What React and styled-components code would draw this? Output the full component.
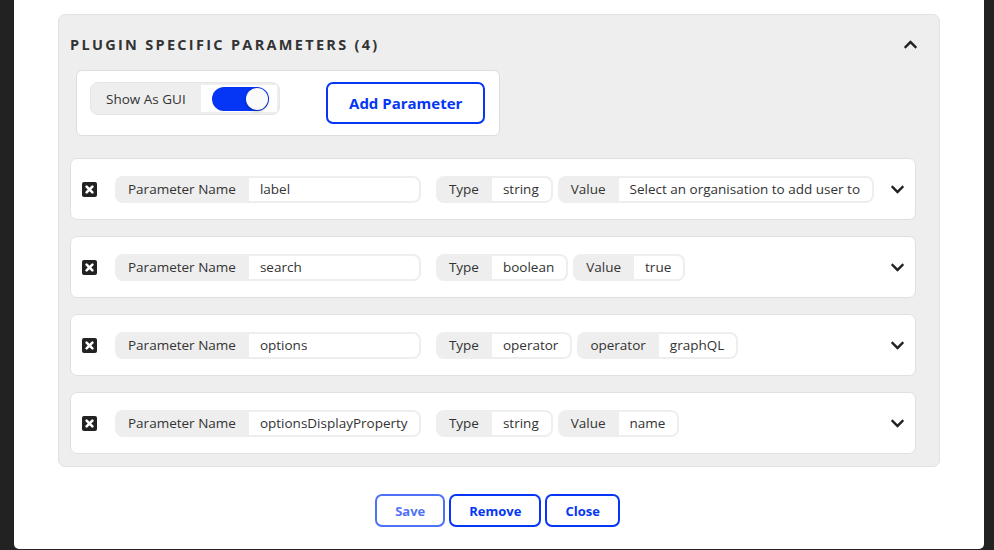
import React from 'react'
import styled, { createGlobalStyle } from 'styled-components'
import { FaChevronUp, FaChevronDown } from 'react-icons/fa'

const GlobalStyle = createGlobalStyle`
    html, body {
        margin: 0;
        padding: 0;
        background: #222222;
        font-family: "Open Sans", "Liberation Sans", sans-serif;
        color: #333;
    }
`

const BLUE = '#0536f5'

const params = [
    { name: 'label', extras: [['Type', 'string'], ['Value', 'Select an organisation to add user to']] },
    { name: 'search', extras: [['Type', 'boolean'], ['Value', 'true']] },
    { name: 'options', extras: [['Type', 'operator'], ['operator', 'graphQL']] },
    { name: 'optionsDisplayProperty', extras: [['Type', 'string'], ['Value', 'name']] },
]

const CloseBox = () => (
    <svg width="15" height="15" viewBox="0 0 15 15">
        <rect x="0" y="0" width="15" height="15" rx="2" fill="#222" />
        <path d="M4.6 4.6 L10.4 10.4 M10.4 4.6 L4.6 10.4" stroke="#fff" strokeWidth="2.6" strokeLinecap="round" />
    </svg>
)

const App = () => {
    return (
        <>
            <GlobalStyle />
            <Page>
                <Modal>
                    <Panel>
                        <PanelHeader>
                            <Title>Plugin Specific Parameters (4)</Title>
                            <Caret><FaChevronUp /></Caret>
                        </PanelHeader>
                        <Toolbar>
                            <ToggleGroup>
                                <ToggleLabel>Show As GUI</ToggleLabel>
                                <ToggleWrap>
                                    <Switch on>
                                        <Knob />
                                    </Switch>
                                </ToggleWrap>
                            </ToggleGroup>
                            <AddButton>Add Parameter</AddButton>
                        </Toolbar>
                        <Rows>
                            {params.map((p) => (
                                <Row key={p.name}>
                                    <RemoveIcon><CloseBox /></RemoveIcon>
                                    <NameGroup>
                                        <PillLabel>Parameter Name</PillLabel>
                                        <NameInput>{p.name}</NameInput>
                                    </NameGroup>
                                    <Extras>
                                        {p.extras.map(([k, v]) => (
                                            <Pill key={k}>
                                                <PillLabel>{k}</PillLabel>
                                                <PillValue>{v}</PillValue>
                                            </Pill>
                                        ))}
                                    </Extras>
                                    <RowCaret><FaChevronDown /></RowCaret>
                                </Row>
                            ))}
                        </Rows>
                    </Panel>
                    <Footer>
                        <FooterButton faded>Save</FooterButton>
                        <FooterButton>Remove</FooterButton>
                        <FooterButton>Close</FooterButton>
                    </Footer>
                </Modal>
            </Page>
        </>
    )
}

const Page = styled.div`
    width: 994px;
    height: 550px;
    overflow: hidden;
    background: #222222;
`
const Modal = styled.div`
    margin-left: 14px;
    width: 970px;
    height: 549px;
    background: #fff;
    border-radius: 0 0 5px 5px;
    padding: 14px 44px 0;
    box-sizing: border-box;
`
const Panel = styled.section`
    background: #eeeeee;
    border: 1px solid #e2e2e2;
    border-radius: 7px;
    padding: 0 23px 11px 11px;
    box-sizing: border-box;
    height: 453px;
`
const PanelHeader = styled.div`
    display: flex;
    align-items: center;
    justify-content: space-between;
    height: 55px;
    padding-top: 4px;
    box-sizing: border-box;
`
const Title = styled.h2`
    margin: 0;
    font-size: 14.5px;
    font-weight: 700;
    letter-spacing: 2.3px;
    text-transform: uppercase;
    color: #333;
`
const Caret = styled.span`
    display: flex;
    font-size: 15px;
    color: #222;
    margin-right: -2px;
`
const Toolbar = styled.div`
    display: flex;
    align-items: center;
    gap: 46px;
    width: 424px;
    height: 66px;
    margin-left: 6px;
    padding: 0 14px 0 13px;
    box-sizing: border-box;
    background: #fff;
    border: 1px solid #dddddd;
    border-radius: 6px;
`
const ToggleGroup = styled.div`
    display: flex;
    align-items: stretch;
    height: 31px;
    background: #eeeeee;
    border: 1px solid #e6e6e6;
    border-radius: 8px;
    overflow: hidden;
    margin-top: -9px;
`
const ToggleLabel = styled.span`
    display: flex;
    align-items: center;
    padding: 0 15px;
    font-size: 13.5px;
    width: 111px;
    box-sizing: border-box;
`
const ToggleWrap = styled.span`
    display: flex;
    align-items: center;
    background: #fff;
    padding: 0 8px 0 11px;
    margin: 2px 2px 2px 0;
`
const Switch = styled.span`
    display: flex;
    align-items: center;
    justify-content: ${({ on }) => (on ? 'flex-end' : 'flex-start')};
    width: 57px;
    height: 24px;
    border-radius: 12px;
    background: ${({ on }) => (on ? BLUE : '#ccc')};
    padding: 1px;
    box-sizing: border-box;
`
const Knob = styled.span`
    width: 22px;
    height: 22px;
    border-radius: 50%;
    background: #fafafa;
    box-shadow: 0 1px 3px rgba(0, 0, 0, 0.35);
`
const AddButton = styled.button`
    height: 42px;
    width: 159px;
    background: #fff;
    border: 2px solid ${BLUE};
    border-radius: 7px;
    color: ${BLUE};
    font-family: "Open Sans", "Liberation Sans", sans-serif;
    font-size: 15px;
    font-weight: 700;
    cursor: pointer;
`
const Rows = styled.div`
    display: flex;
    flex-direction: column;
    gap: 16px;
    margin-top: 22px;
`
const Row = styled.div`
    display: flex;
    align-items: center;
    height: 62px;
    padding: 0 10px 0 11px;
    box-sizing: border-box;
    background: #fff;
    border: 1px solid #e0e0e0;
    border-radius: 7px;
`
const RemoveIcon = styled.span`
    display: flex;
    margin-right: 18px;
`
const Pill = styled.div`
    display: flex;
    align-items: stretch;
    height: 27px;
    background: #eeeeee;
    border-radius: 8px;
    overflow: hidden;
    font-size: 13.5px;
    color: #333;
`
const NameGroup = styled(Pill)`
    margin-right: 15px;
`
const PillLabel = styled.span`
    display: flex;
    align-items: center;
    padding: 0 13px;
`
const PillValue = styled.span`
    display: flex;
    align-items: center;
    background: #fff;
    padding: 0 12px 0 11px;
    margin: 2px 2px 2px 0;
    border-radius: 0 6px 6px 0;
`
const NameInput = styled(PillValue)`
    width: 170px;
    box-sizing: border-box;
`
const Extras = styled.div`
    display: flex;
    gap: 5px;
    flex: 1;
`
const RowCaret = styled.span`
    display: flex;
    font-size: 15px;
    color: #222;
`
const Footer = styled.div`
    display: flex;
    justify-content: center;
    gap: 4px;
    margin-top: 27px;
    padding-right: 3px;
`
const FooterButton = styled.button`
    height: 33px;
    padding: 0 18px;
    background: #fff;
    border: 2px solid ${BLUE};
    border-radius: 7px;
    color: ${BLUE};
    font-family: "Open Sans", "Liberation Sans", sans-serif;
    font-size: 13px;
    font-weight: 700;
    opacity: ${({ faded }) => (faded ? 0.7 : 1)};
    cursor: pointer;
`

export default App
